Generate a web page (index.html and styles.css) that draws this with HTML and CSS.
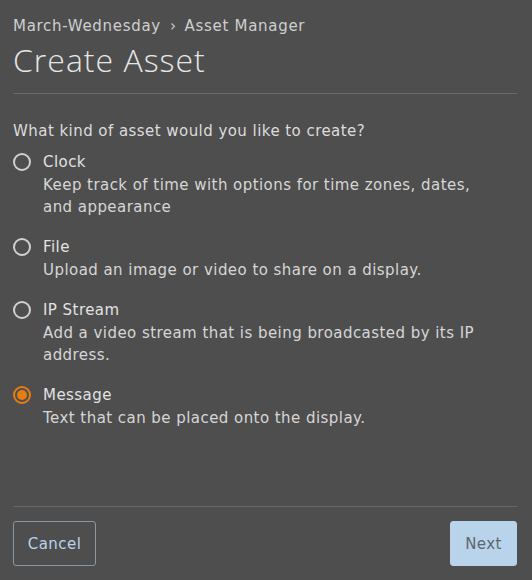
FILE: index.html
```html
<!DOCTYPE html>
<html>
<head>
<meta charset="utf-8">
<link rel="stylesheet" href="styles.css">
</head>
<body>
<div class="page">
  <header class="head">
    <div class="crumbs"><span>March-Wednesday</span><span class="sep">›</span><span>Asset Manager</span></div>
    <h1 class="title">Create Asset</h1>
  </header>
  <main class="body">
    <p class="question">What kind of asset would you like to create?</p>
    <div class="options">
      <label class="opt">
        <span class="radio"></span>
        <span class="text"><span class="name">Clock</span><span class="desc">Keep track of time with options for time zones, dates, and appearance</span></span>
      </label>
      <label class="opt">
        <span class="radio"></span>
        <span class="text"><span class="name">File</span><span class="desc">Upload an image or video to share on a display.</span></span>
      </label>
      <label class="opt">
        <span class="radio"></span>
        <span class="text"><span class="name">IP Stream</span><span class="desc">Add a video stream that is being broadcasted by its IP address.</span></span>
      </label>
      <label class="opt">
        <span class="radio checked"></span>
        <span class="text"><span class="name">Message</span><span class="desc">Text that can be placed onto the display.</span></span>
      </label>
    </div>
  </main>
  <footer class="foot">
    <button class="btn cancel">Cancel</button>
    <button class="btn next">Next</button>
  </footer>
</div>
</body>
</html>
```
FILE: styles.css
```css
html, body { margin: 0; padding: 0; height: 100%; }
body {
  background: #4e4e4e;
  font-family: "DejaVu Sans", "Open Sans", sans-serif;
  color: #dcdcdc;
  letter-spacing: 0.45px;
}
.page {
  height: 100%;
  box-sizing: border-box;
  padding: 0 15px 0 13px;
  display: flex;
  flex-direction: column;
}
.head { border-bottom: 1px solid #6a6a6a; padding-top: 16px; padding-bottom: 14px; }
.crumbs { font-size: 15px; color: #cfcfcf; line-height: 20px; letter-spacing: 0.7px; }
.sep { margin: 0 8px 0 9px; }
.title {
  margin: 5px 0 0; font-family: "Open Sans", sans-serif; font-weight: 300;
  font-size: 32px; line-height: 38px; color: #e6e6e6; letter-spacing: 1px;
}
.body { flex: 1; }
.question { margin: 26px 0 0; font-size: 15px; line-height: 22px; color: #dcdcdc; }
.options { display: flex; flex-direction: column; gap: 17px; margin-top: 8px; }
.opt { display: flex; gap: 12px; align-items: flex-start; padding-right: 27px; }
.radio {
  flex: none; width: 18px; height: 18px; box-sizing: border-box;
  border: 2px solid #d0d0d0; border-radius: 50%; margin-top: 3px;
  display: flex; align-items: center; justify-content: center;
}
.radio.checked { border-color: #e57d10; }
.radio.checked::after { content: ""; width: 10px; height: 10px; border-radius: 50%; background: #e57d10; }
.text { display: flex; flex-direction: column; }
.name { font-size: 15px; line-height: 24px; color: #e2e2e2; }
.desc { font-size: 15px; line-height: 22px; color: #d6d6d6; }
.foot {
  border-top: 1px solid #686868;
  display: flex; justify-content: space-between;
  padding: 14px 0 14px;
}
.btn {
  font-family: inherit; font-size: 15px; height: 45px; border-radius: 3px;
  padding: 0; letter-spacing: 0.45px;
}
.cancel { background: transparent; border: 1px solid #8a98a4; color: #b7d3ec; width: 83px; }
.next { background: #b8d3ea; border: 1px solid #b8d3ea; color: #5c6670; width: 67px; }
```
